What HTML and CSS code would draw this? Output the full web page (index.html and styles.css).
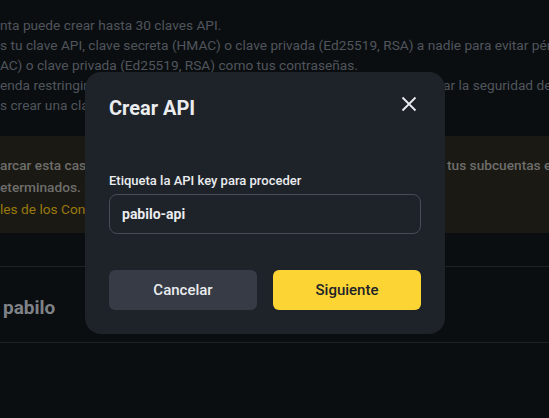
FILE: index.html
```html
<!DOCTYPE html>
<html lang="es">
<head>
  <meta charset="UTF-8" />
  <meta name="viewport" content="width=device-width, initial-scale=1.0"/>
  <title>Gestión de API</title>
  <link rel="stylesheet" href="styles.css">
</head>
<body>
  <div class="page">
    <div class="notes">
      <p>nta puede crear hasta 30 claves API.</p>
      <p>s tu clave API, clave secreta (HMAC) o clave privada (Ed25519, RSA) a nadie para evitar pérdidas de activos.</p>
      <p>AC) o clave privada (Ed25519, RSA) como tus contraseñas.</p>
      <p class="split"><span class="left">enda restringir el acceso a direcciones IP de confianza para mejor</span><span>ar la seguridad de tu cuenta.</span></p>
      <p>s crear una clave API si no completaste la verificación.</p>
    </div>

    <div class="warning">
      <p class="split wide"><span class="left">arcar esta casilla, podrás usar la API para operar con</span><span>tus subcuentas en</span></p>
      <p>eterminados.</p>
      <p><a href="#">les de los Condiciones de uso de la API</a></p>
    </div>

    <div class="account-row">pabilo</div>
  </div>

  <div class="overlay">
    <div class="modal">
      <div class="modal-header">
        <h2>Crear API</h2>
        <button class="close" aria-label="Cerrar">
          <svg width="16" height="16" viewBox="0 0 16 16">
            <path d="M1.5 1.5 L14.5 14.5 M14.5 1.5 L1.5 14.5" stroke="#eaecef" stroke-width="1.8" fill="none"/>
          </svg>
        </button>
      </div>

      <div class="modal-body">
        <label for="api-label">Etiqueta la API key para proceder</label>
        <input type="text" id="api-label" value="pabilo-api" />
      </div>

      <div class="modal-actions">
        <button class="btn secondary">Cancelar</button>
        <button class="btn primary">Siguiente</button>
      </div>
    </div>
  </div>
</body>
</html>
```

FILE: styles.css
```css
:root {
  --bg: #0b0e11;
  --modal-bg: #1e2329;
  --text: #eaecef;
  --muted: #50555c;
  --line: #1f2228;
  --yellow: #fcd535;
}

* {
  box-sizing: border-box;
}

body {
  margin: 0;
  font-family: Roboto, "Liberation Sans", sans-serif;
  background-color: var(--bg);
  color: var(--text);
  overflow: hidden;
  height: 418px;
}

p {
  margin: 0;
  white-space: nowrap;
}

.notes {
  padding-top: 15px;
  font-size: 13.7px;
  line-height: 20px;
  color: var(--muted);
}

.split {
  display: grid;
  grid-template-columns: 443px auto;
}

.split.wide {
  grid-template-columns: 447px auto;
}

.split .left {
  overflow: hidden;
}

.warning {
  margin-top: 21px;
  padding: 18px 0 13px;
  background: #1a1914;
  font-size: 13.7px;
  font-weight: 500;
  line-height: 22px;
  color: #6e6e6b;
}

.warning a {
  color: #9a7a0e;
  text-decoration: none;
  font-weight: 400;
}

.account-row {
  margin-top: 33px;
  padding: 29px 3px 22px;
  border-top: 1px solid var(--line);
  border-bottom: 1px solid var(--line);
  font-size: 19px;
  font-weight: 700;
  line-height: 24px;
  color: #7f8287;
}

.overlay {
  position: fixed;
  top: 0; left: 0; right: 0; bottom: 0;
  padding: 72px 0 0 85px;
}

.modal {
  width: 360px;
  padding: 24px;
  background: var(--modal-bg);
  border-radius: 16px;
}

.modal-header {
  display: flex;
  justify-content: space-between;
  align-items: flex-start;
}

.modal-header h2 {
  margin: 0;
  font-size: 20px;
  font-weight: 700;
  line-height: 24px;
  color: var(--text);
}

.close {
  display: flex;
  padding: 0;
  margin-right: 4px;
  background: none;
  border: none;
  cursor: pointer;
}

.modal-body {
  padding-top: 52px;
  display: flex;
  flex-direction: column;
  gap: 4px;
}

label {
  font-size: 13px;
  font-weight: 500;
  line-height: 18px;
  color: var(--text);
}

input[type="text"] {
  height: 40px;
  padding: 0 12px;
  background: transparent;
  border: 1px solid #474d57;
  border-radius: 8px;
  font-family: inherit;
  font-size: 14px;
  font-weight: 700;
  color: var(--text);
  outline: none;
}

.modal-actions {
  display: flex;
  gap: 16px;
  margin-top: 36px;
}

.btn {
  flex: 1;
  height: 40px;
  border: none;
  border-radius: 6px;
  font-family: inherit;
  font-size: 15px;
  font-weight: 500;
  cursor: pointer;
}

.secondary {
  background: #363b45;
  color: var(--text);
}

.primary {
  background: var(--yellow);
  color: #1e2329;
}
```
